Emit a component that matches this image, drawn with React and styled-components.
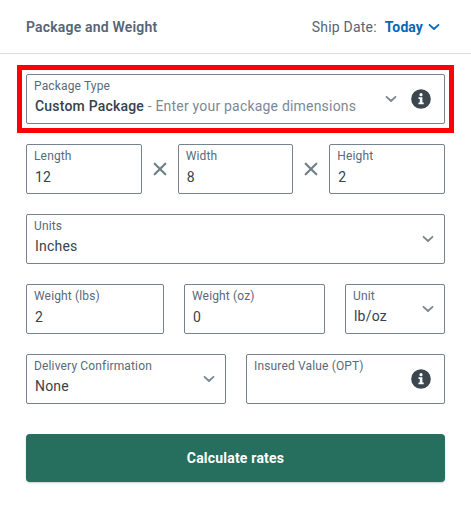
import React from "react";
import styled, { createGlobalStyle } from "styled-components";

const GlobalStyle = createGlobalStyle`
  *, *::before, *::after { box-sizing: border-box; }
  body {
    margin: 0;
    background: #fff;
    font-family: Roboto, "Liberation Sans", sans-serif;
    overflow: hidden;
  }
`;

const Page = styled.main`
  width: 471px;
  height: 509px;
  background: #fff;
`;

const Header = styled.header`
  height: 54px;
  padding: 0 31px 0 26px;
  display: flex;
  align-items: center;
  justify-content: space-between;
  border-bottom: 1px solid #dadde6;
`;

const Title = styled.h1`
  margin: 0;
  font-size: 14px;
  line-height: 20px;
  font-weight: 600;
  letter-spacing: 0.18px;
  color: #556575;
`;

const ShipDate = styled.div`
  display: flex;
  align-items: center;
  font-size: 14px;
  line-height: 20px;
  letter-spacing: 0.2px;
  color: #556575;
`;

const DateButton = styled.button`
  display: flex;
  align-items: center;
  gap: 5px;
  margin: 0 0 0 8px;
  padding: 0;
  border: 0;
  background: none;
  font: inherit;
  font-weight: 700;
  letter-spacing: 0.1px;
  color: #0868b5;
`;

const Form = styled.form`
  display: flex;
  flex-direction: column;
  gap: 20px;
  padding: 20px 26px 0;
`;

const Highlight = styled.div`
  outline: 5px solid #ff0006;
  outline-offset: 4px;
`;

const Row = styled.div`
  display: grid;
  grid-template-columns: ${(p) => p.$columns};
  column-gap: ${(p) => p.$gap || 0}px;
  align-items: center;
`;

const FieldBox = styled.div`
  height: 50px;
  min-width: 0;
  padding: 0 ${(p) => p.$end || 10}px 0 7px;
  border: 1px solid #758390;
  border-radius: 2px;
  display: flex;
  align-items: center;
  justify-content: space-between;
`;

const FieldText = styled.div`
  align-self: flex-start;
  padding-top: 3px;
  white-space: nowrap;
`;

const Label = styled.div`
  font-size: 12px;
  line-height: 16px;
  letter-spacing: 0.15px;
  color: #596a7a;
`;

const Value = styled.div`
  padding: ${(p) => (p.$input ? 4 : 3)}px 0 0 1px;
  font-size: 14px;
  line-height: 18px;
  letter-spacing: 0.2px;
  color: #37424d;
`;

const Strong = styled.span`
  font-weight: 500;
`;

const Hint = styled.span`
  color: #7c8995;
`;

const Icons = styled.div`
  display: flex;
  align-items: center;
  gap: 14px;
`;

const Times = styled.svg`
  display: block;
  justify-self: center;
`;

const Glyph = styled.svg`
  display: block;
  flex: none;
`;

const Submit = styled.button`
  height: 48px;
  margin-top: 10px;
  padding: 0;
  border: 0;
  border-radius: 4px;
  background: #266e5d;
  box-shadow: 0 1px 2px rgba(0, 0, 0, 0.2);
  color: #fff;
  font: 700 14px/20px Roboto, "Liberation Sans", sans-serif;
  letter-spacing: 0.2px;
`;

function Chevron({ color = "#798692", width = 12 }) {
  return (
    <Glyph width={width} height="8" viewBox="0 0 12 8" fill="none" stroke={color} strokeWidth="1.8">
      <path d="M1.5 1.8 L6 6 L10.5 1.8" strokeLinecap="round" strokeLinejoin="round" />
    </Glyph>
  );
}

function Info() {
  return (
    <Glyph width="20" height="20" viewBox="0 0 20 20">
      <circle cx="10" cy="10" r="9.8" fill="#3b464f" />
      <circle cx="10" cy="5.7" r="1.6" fill="#fff" />
      <path d="M7.5 8.3h3.9v5.3h1.3v1.7H7.5v-1.7h1.3v-3.6H7.5z" fill="#fff" />
    </Glyph>
  );
}

function Multiply() {
  return (
    <Times width="14" height="14" viewBox="0 0 14 14" stroke="#708089" strokeWidth="2.2">
      <path d="M1.7 1.7 L12.3 12.3 M12.3 1.7 L1.7 12.3" strokeLinecap="round" />
    </Times>
  );
}

function Field({ label, value, input, select, info, end }) {
  return (
    <FieldBox $end={end}>
      <FieldText>
        <Label>{label}</Label>
        {value && <Value $input={input}>{value}</Value>}
      </FieldText>
      {(select || info) && (
        <Icons>
          {select && <Chevron />}
          {info && <Info />}
        </Icons>
      )}
    </FieldBox>
  );
}

export default function App() {
  return (
    <Page>
      <GlobalStyle />
      <Header>
        <Title>Package and Weight</Title>
        <ShipDate>
          Ship Date:
          <DateButton type="button">
            Today
            <Chevron color="#0868b5" />
          </DateButton>
        </ShipDate>
      </Header>
      <Form>
        <Highlight>
          <Field
            label="Package Type"
            value={
              <>
                <Strong>Custom Package</Strong>
                <Hint> - Enter your package dimensions</Hint>
              </>
            }
            select
            info
            end={13}
          />
        </Highlight>
        <Row $columns="1fr 36px 1fr 36px 1fr">
          <Field label="Length" value="12" input />
          <Multiply />
          <Field label="Width" value="8" input />
          <Multiply />
          <Field label="Height" value="2" input />
        </Row>
        <Field label="Units" value="Inches" select />
        <Row $columns="138px 141px 100px" $gap={20}>
          <Field label="Weight (lbs)" value="2" input />
          <Field label="Weight (oz)" value="0" input />
          <Field label="Unit" value="lb/oz" select />
        </Row>
        <Row $columns="200px 199px" $gap={20}>
          <Field label="Delivery Confirmation" value="None" select />
          <Field label="Insured Value (OPT)" info end={13} />
        </Row>
        <Submit type="button">Calculate rates</Submit>
      </Form>
    </Page>
  );
}
